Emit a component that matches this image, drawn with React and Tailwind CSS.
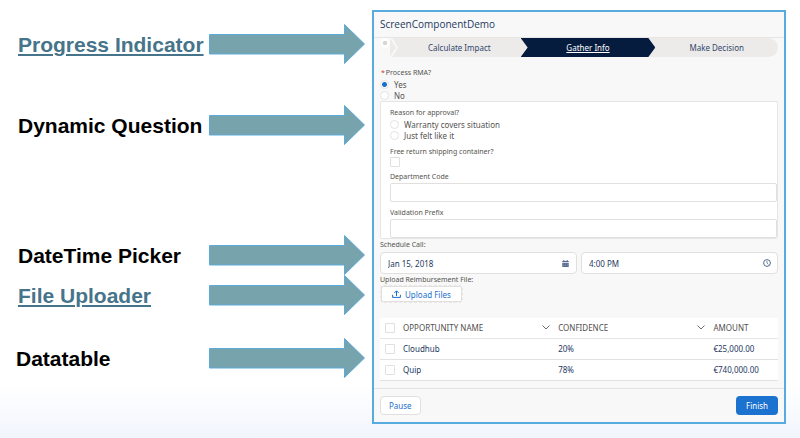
import { useState } from 'react';
import clsx from 'clsx';

const CALLOUTS = [
  { label: 'Progress Indicator', href: '#progress', spacing: 'mb-[41px] pl-[18px]' },
  { label: 'Dynamic Question', spacing: 'mb-[90px] pl-[18px]' },
  { label: 'DateTime Picker', spacing: 'pl-[18px]' },
  { label: 'File Uploader', href: '#upload', spacing: 'mb-[23px] pl-[18px]' },
  { label: 'Datatable', spacing: 'pl-4' },
];

const ROWS = [
  { name: 'Cloudhub', confidence: '20%', amount: '€25,000.00' },
  { name: 'Quip', confidence: '78%', amount: '€740,000.00' },
];

const RADIO =
  'size-[9px] shrink-0 appearance-none rounded-full border border-[#e4e3e2] bg-white checked:bg-[radial-gradient(circle,#1b6fcc_0_2px,#fff_3px)]';
const CHECKBOX =
  'block size-[10px] shrink-0 appearance-none rounded-[1px] border border-[#e1e0df] bg-white checked:bg-[#1b6fcc]';
const TEXT_INPUT = 'mt-px block h-[19px] w-full rounded-xs border border-[#e1e0df] bg-white px-2';
const PICKER_INPUT = 'block h-[22px] w-full rounded-sm border border-[#e1e0df] bg-white px-[7px]';

const Arrow = () => (
  <svg width="157" height="40" viewBox="0 0 157 40" aria-hidden="true">
    <path
      d="M.5 10.500H135.500V.5L155.500 20L135.500 39.500V30H.5Z"
      fill="#76a3ac"
      stroke="#5cabdd"
    />
  </svg>
);

const Callout = ({ label, href, spacing }) => (
  <li className={clsx('flex h-10 items-center justify-between', spacing)}>
    {href ? (
      <a href={href} className="pt-0.5 text-[#46748a] underline decoration-2 underline-offset-2">
        {label}
      </a>
    ) : (
      <span className="pt-0.5">{label}</span>
    )}
    <Arrow />
  </li>
);

const Radio = ({ name, label, checked, onChange }) => (
  <label className="flex h-[11px] items-center gap-[5px]">
    <input type="radio" name={name} checked={checked} onChange={onChange} className={RADIO} />
    {label}
  </label>
);

const ProgressBar = () => (
  <nav aria-label="Progress" id="progress" className="relative mx-1.5">
    <ol className="grid h-[19px] grid-cols-3 overflow-hidden rounded-r-full bg-[#ecebea] pl-3 text-center text-[8px] leading-[19px] text-[#32466b]">
      <li className="pl-1.5">Calculate Impact</li>
      <li className="-mr-1.5 bg-[#061c3f] text-white underline [clip-path:polygon(0_0,calc(100%-7px)_0,100%_50%,calc(100%-7px)_100%,0_100%,7px_50%)]">
        Gather Info
      </li>
      <li className="pl-1.5">Make Decision</li>
    </ol>
    <svg className="absolute left-0 top-0" width="20" height="19" viewBox="0 0 20 19" aria-hidden="true">
      <path d="M0 0H10V19H0Z" fill="#f8f8f8" />
      <path d="M11 0L17 9.500L11 19" fill="none" stroke="#fafafa" strokeWidth="1.500" />
      <circle cx="5" cy="5" r="4.500" fill="#fff" />
      <circle cx="5" cy="5" r="2.300" fill="#d8d7d6" />
    </svg>
  </nav>
);

const SortArrow = () => (
  <svg width="8" height="5" viewBox="0 0 8 5" fill="none" stroke="#706e6b" aria-hidden="true">
    <path d="M.5 .5L4 4L7.500 .5" />
  </svg>
);

const HeaderCell = ({ children, sortable }) => (
  <th scope="col" className="p-0 font-normal">
    <div className="flex items-center justify-between pr-2">
      {children}
      {sortable && <SortArrow />}
    </div>
  </th>
);

const DataTable = () => (
  <table className="w-full table-fixed bg-white text-left text-[8px] text-[#24395f]">
    <colgroup>
      <col className="w-[23px]" />
      <col className="w-[39%]" />
      <col className="w-[39%]" />
      <col />
    </colgroup>
    <thead className="text-[#514f4d]">
      <tr className="h-5 border-b border-[#e8e7e6]">
        <th className="p-0 pl-[5px]">
          <input type="checkbox" aria-label="Select all" className={CHECKBOX} />
        </th>
        <HeaderCell sortable>OPPORTUNITY NAME</HeaderCell>
        <HeaderCell sortable>CONFIDENCE</HeaderCell>
        <HeaderCell>AMOUNT</HeaderCell>
      </tr>
    </thead>
    <tbody>
      {ROWS.map((row) => (
        <tr key={row.name} className="h-[21px] border-b border-[#e3e2e1]">
          <td className="p-0 pl-[5px]">
            <input type="checkbox" aria-label={`Select ${row.name}`} className={CHECKBOX} />
          </td>
          <td className="p-0">{row.name}</td>
          <td className="p-0">{row.confidence}</td>
          <td className="p-0">{row.amount}</td>
        </tr>
      ))}
    </tbody>
  </table>
);

const ScreenFlow = () => {
  const [approved, setApproved] = useState('yes');
  const [reason, setReason] = useState('');
  const [date, setDate] = useState('Jan 15, 2018');
  const [time, setTime] = useState('4:00 PM');

  return (
    <section className="mr-3.5 mt-2.5 min-w-0 flex-1 self-start border-2 border-[#57abdf] bg-[#f8f8f8] font-['Noto_Sans',sans-serif] text-[8px] leading-[11px] text-[#55534f]">
      <h1 className="border-b border-[#e6e5e4] pl-1.5 font-['Open_Sans',sans-serif] text-[10px] leading-[25px] text-[#24395f]">
        ScreenComponentDemo
      </h1>
      <ProgressBar />

      <form className="mx-1.5" onSubmit={(e) => e.preventDefault()}>
        <fieldset className="mt-2.5">
          <legend className="mb-px pl-px text-[7px]">
            <span className="mr-px text-[#c23934]">*</span>Process RMA?
          </legend>
          <Radio name="rma" label="Yes" checked={approved === 'yes'} onChange={() => setApproved('yes')} />
          <Radio name="rma" label="No" checked={approved === 'no'} onChange={() => setApproved('no')} />
        </fieldset>

        {approved === 'yes' && (
          <div className="rounded-xs border border-[#e6e5e4] bg-white pl-[9px] pt-[5px]">
            <fieldset>
              <legend className="mb-px text-[7px]">Reason for approval?</legend>
              <Radio
                name="reason"
                label="Warranty covers situation"
                checked={reason === 'warranty'}
                onChange={() => setReason('warranty')}
              />
              <Radio
                name="reason"
                label="Just felt like it"
                checked={reason === 'felt'}
                onChange={() => setReason('felt')}
              />
            </fieldset>
            <label className="mt-[5px] block text-[7px]">
              Free return shipping container?
              <input type="checkbox" className={CHECKBOX} />
            </label>
            <label className="mt-1 block text-[7px]">
              Department Code
              <input type="text" className={TEXT_INPUT} />
            </label>
            <label className="mt-[5px] block text-[7px]">
              Validation Prefix
              <input type="text" className={TEXT_INPUT} />
            </label>
          </div>
        )}

        <label htmlFor="call-date" className="block text-[7px]">
          Schedule Call:
        </label>
        <div className="mt-0.5 grid grid-cols-2 gap-1 text-[#24395f]">
          <div className="relative">
            <input
              id="call-date"
              value={date}
              onChange={(e) => setDate(e.target.value)}
              className={PICKER_INPUT}
            />
            <svg className="absolute right-2 top-2" width="7" height="7" viewBox="0 0 7 7" fill="#54698d" aria-hidden="true">
              <path d="M1.300 0h1v.9h2.400V0h1v.9H6.700v1.200H.3V.9h1ZM.3 2.700h6.400V7H.3Z" />
              <path d="M1.200 4h4.600M1.200 5.500h4.600" stroke="#fff" strokeWidth=".3" strokeDasharray="1 .8" />
            </svg>
          </div>
          <div className="relative">
            <input
              aria-label="Call time"
              value={time}
              onChange={(e) => setTime(e.target.value)}
              className={PICKER_INPUT}
            />
            <svg className="absolute right-[7px] top-[7px]" width="8" height="8" viewBox="0 0 8 8" fill="none" stroke="#54698d" aria-hidden="true">
              <circle cx="4" cy="4" r="3.400" />
              <path d="M4 2v2.200l1.400 1.200" strokeWidth=".8" />
            </svg>
          </div>
        </div>

        <p className="text-[7px]">Upload Reimbursement File:</p>
        <div id="upload" className="inline-block rounded-sm border border-dashed border-[#e8e7e6]">
          <button
            type="button"
            className="flex h-4 items-center gap-1 rounded-xs border border-[#e1e0df] bg-white px-2.5 text-[#1b6fcc]"
          >
            <svg width="9" height="8" viewBox="0 0 9 8" fill="none" stroke="currentColor" aria-hidden="true">
              <path d="M.6 4.800V7.400H8.400V4.800M4.500 6V1M2.300 3L4.500 .8L6.700 3" />
            </svg>
            Upload Files
          </button>
        </div>

        <div className="mt-[15px]">
          <DataTable />
        </div>
      </form>

      <footer className="mt-[7px] flex justify-between border-t border-[#e3e2e1] px-1.5 pb-[7px] pt-[7px]">
        <button type="button" className="h-[19px] rounded-sm border border-[#e1e0df] bg-white px-2 text-[#1b6fcc]">
          Pause
        </button>
        <button type="button" className="h-[19px] rounded-sm bg-[#1b72cf] px-2.5 text-white">
          Finish
        </button>
      </footer>
    </section>
  );
};

const App = () => (
  <main className="flex min-h-screen bg-linear-to-b from-white from-88% to-[#f1f5fc]">
    <ul className="w-[372px] shrink-0 pr-1.5 pt-6 font-['Liberation_Sans',Arial,sans-serif] text-[21px] font-bold leading-6 text-black">
      {CALLOUTS.map((item) => (
        <Callout key={item.label} {...item} />
      ))}
    </ul>
    <ScreenFlow />
  </main>
);

export default App;
